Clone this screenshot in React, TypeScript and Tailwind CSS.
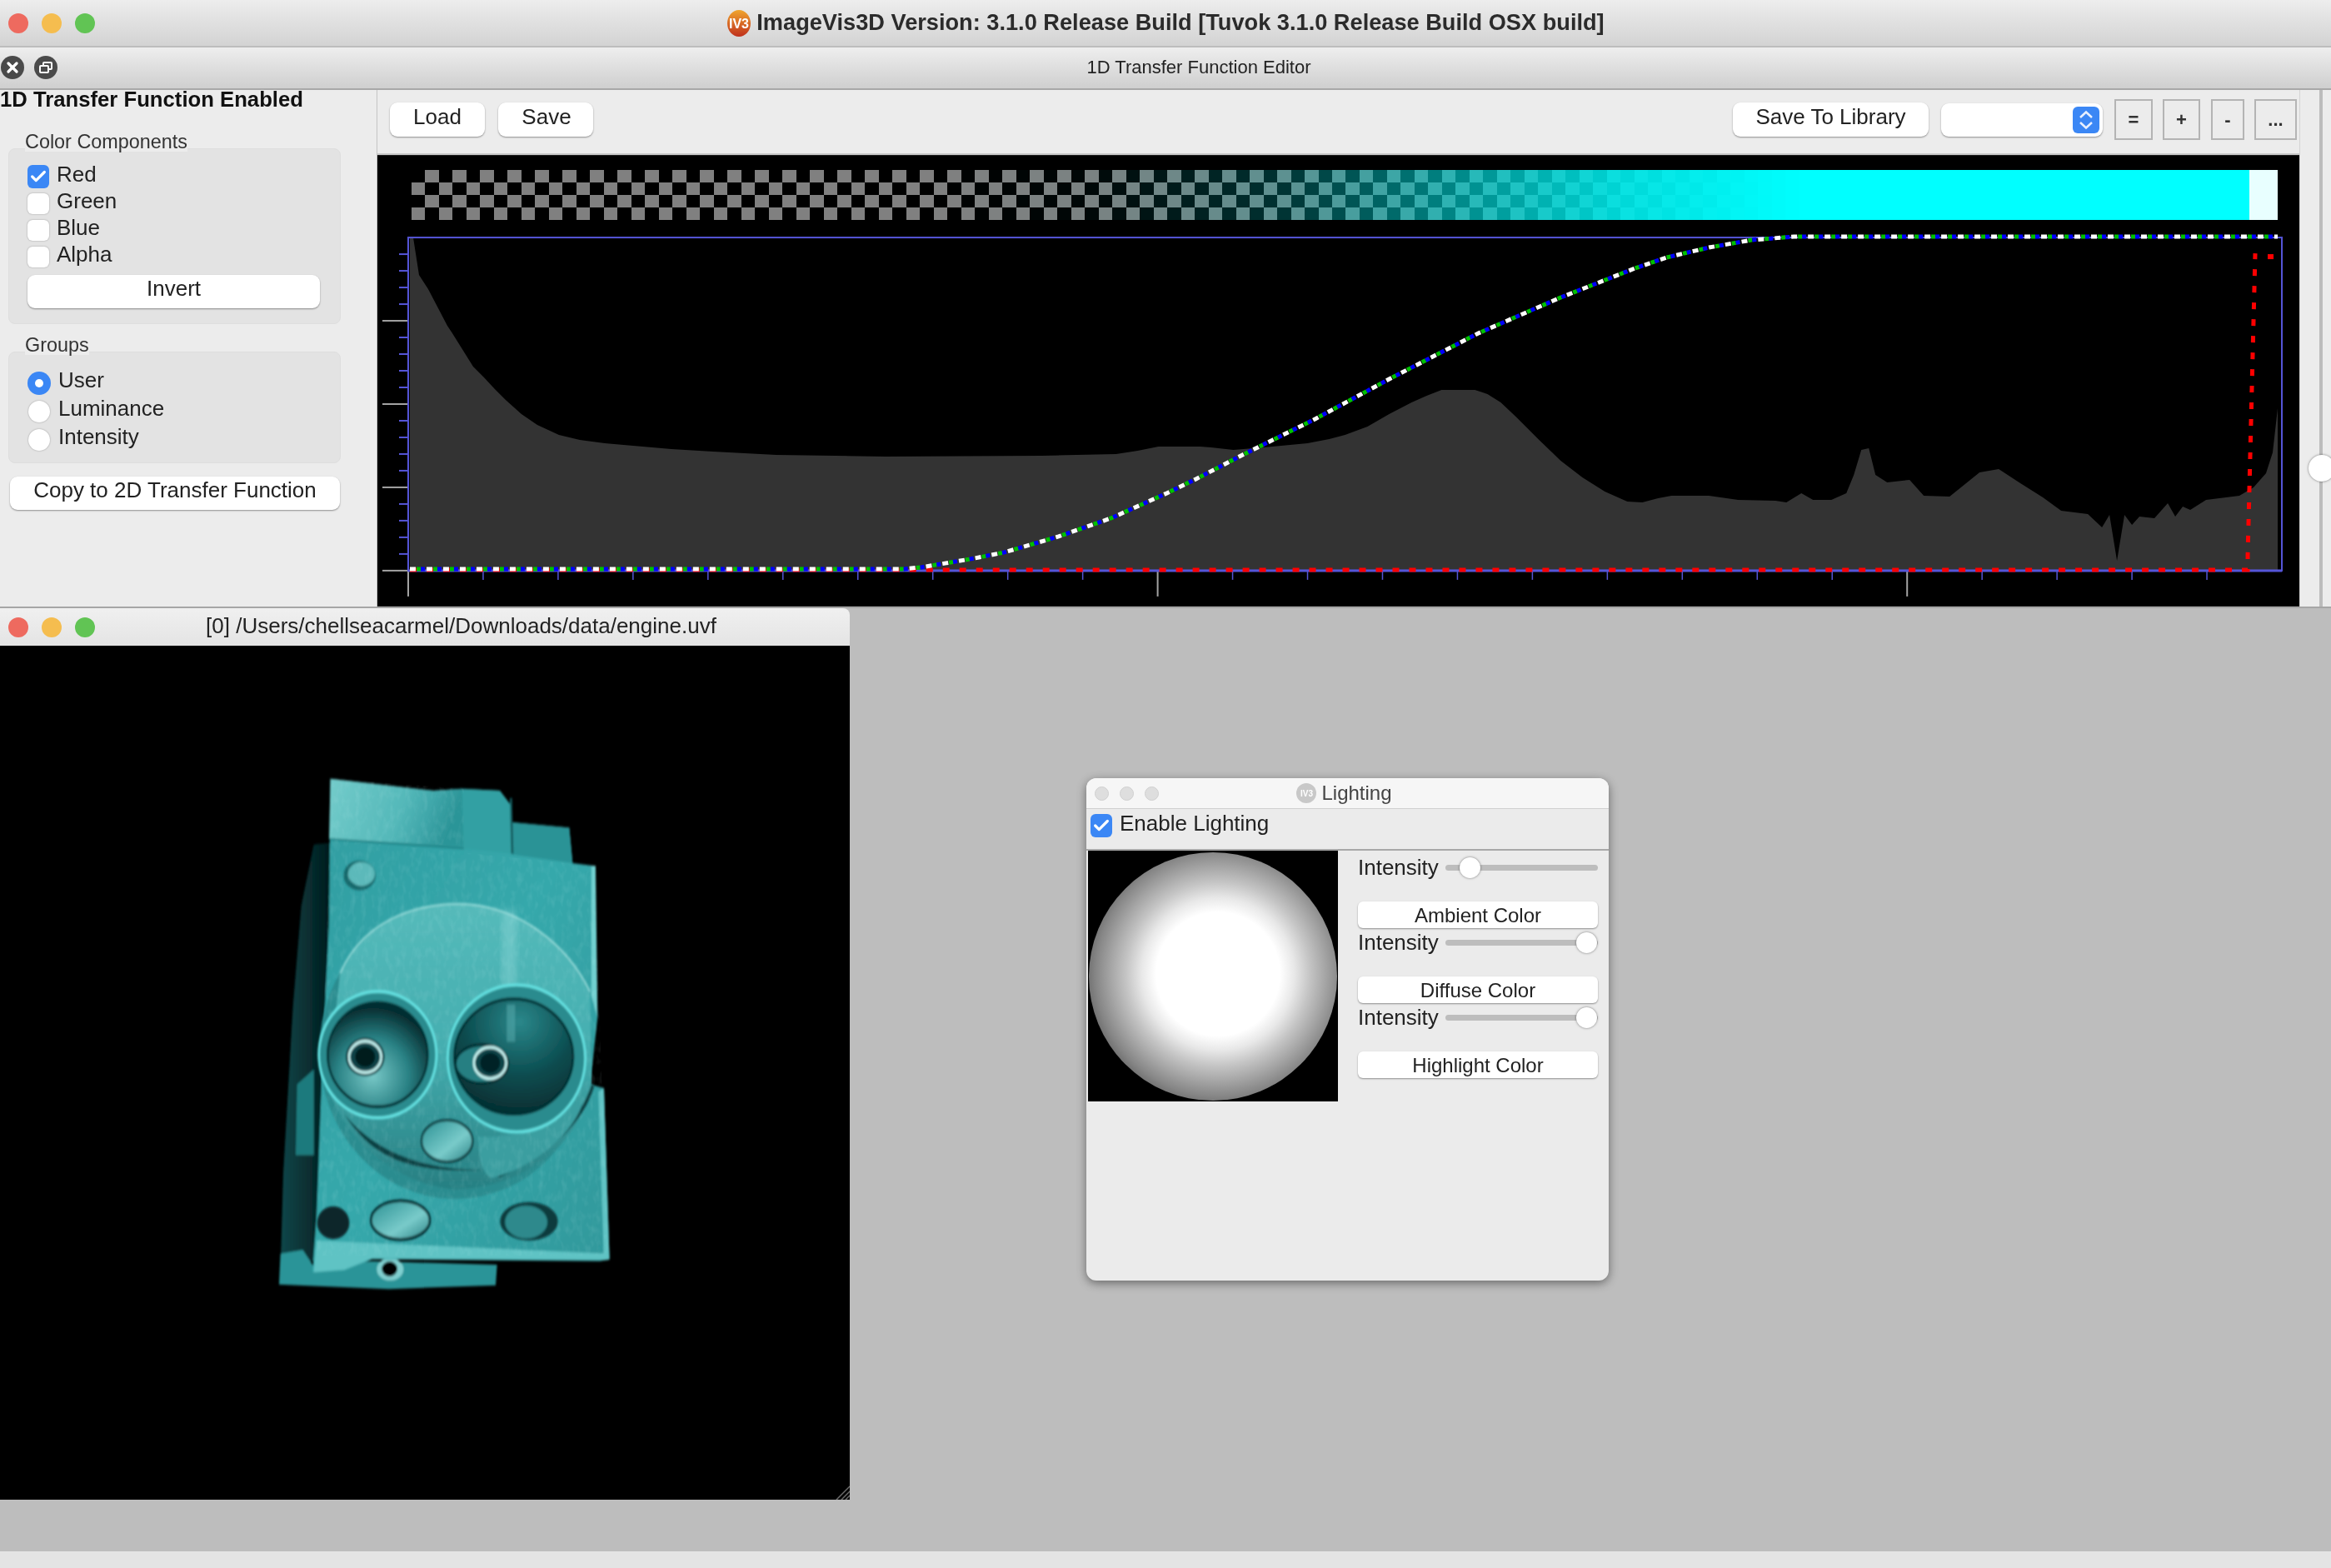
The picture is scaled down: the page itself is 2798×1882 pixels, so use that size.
import React from 'react'
import { Check, X } from 'lucide-react'

const histogram = [
  [491, 285], [495, 285], [502, 330], [513, 347], [536, 391], [542, 400], [567, 440], [580, 453], [593, 467], [606, 480],
  [625, 497], [644, 510], [670, 522], [695, 528], [725, 532], [759, 535], [805, 539], [855, 542], [931, 546], [1062, 548],
  [1250, 547], [1339, 545], [1365, 541], [1390, 536], [1440, 536],
  [1453, 537], [1480, 540], [1516, 537], [1569, 532], [1595, 527], [1614, 522], [1641, 512], [1667, 497], [1694, 483],
  [1712, 475], [1730, 468], [1770, 468], [1785, 473], [1801, 483], [1819, 500], [1846, 527], [1873, 553], [1899, 573],
  [1926, 590], [1953, 602], [1971, 603], [1990, 598], [2006, 595], [2051, 595], [2086, 600],
  [2131, 601], [2144, 603], [2162, 592], [2176, 600], [2198, 600], [2216, 592], [2225, 570], [2234, 540], [2243, 538],
  [2251, 570], [2265, 579], [2292, 576], [2309, 595], [2340, 596], [2376, 567], [2399, 563], [2425, 580], [2452, 597],
  [2474, 613], [2506, 617], [2523, 633], [2532, 618], [2541, 673], [2550, 618], [2559, 630], [2568, 620], [2586, 622],
  [2602, 604], [2611, 620], [2620, 608], [2629, 612], [2648, 600], [2688, 595], [2705, 585], [2720, 568], [2728, 543],
  [2734, 490], [2734, 685], [491, 685],
]

const curve =
  '491,683 1085,683 1105,681 1135,676 1170,670 1205,663 1270,644 1333,622 1400,592 1435,575 1489,547 1578,503 1667,455 1774,400 1873,357 1962,322 2000,309 2051,297 2102,288 2153,284 2734,284'

const alphaStops = [
  [1100, 0], [1300, 0.03], [1530, 0.2], [1750, 0.55], [1944, 0.85], [2100, 0.97], [2160, 1],
]

const alphaAt = (x: number) => {
  if (x <= alphaStops[0][0]) return 0
  for (let i = 1; i < alphaStops.length; i++) {
    const [x1, a1] = alphaStops[i]
    const [x0, a0] = alphaStops[i - 1]
    if (x <= x1) return a0 + ((a1 - a0) * (x - x0)) / (x1 - x0)
  }
  return 1
}

const checkerCells = () => {
  const cells = []
  for (let k = 0; k * 16.5 + 493 < 2700; k++) {
    const x = 493 + k * 16.5
    const a = alphaAt(x)
    for (let r = 0; r < 4; r++) {
      const base = (k + r) % 2 === 1 ? 128 : 0
      const red = Math.round(base * Math.pow(1 - a, 1.4))
      const rest = Math.round(base * Math.pow(1 - a, 1.4) + 255 * a)
      cells.push(
        <rect key={`${k}-${r}`} x={x} y={204 + r * 15} width={16.5} height={15} fill={`rgb(${red},${rest},${rest})`} />,
      )
    }
  }
  return cells
}

const TransferChart = () => {
  const yTicks = []
  for (let i = 1; i <= 20; i++) {
    const y = 285 + i * 20
    const major = i % 5 === 0
    yTicks.push(
      <line key={y} x1={major ? 458 : 478} x2={489} y1={y} y2={y} stroke={major ? '#a3a3a3' : '#5555d8'} strokeWidth={2} />,
    )
  }
  const xTicks = []
  for (let i = 0; i <= 24; i++) {
    const x = 489 + i * 90
    const major = i % 10 === 0
    xTicks.push(
      <line key={x} x1={x} x2={x} y1={685} y2={major ? 716 : 696} stroke={major ? '#a3a3a3' : '#5555d8'} strokeWidth={major ? 2 : 1.5} />,
    )
  }
  return (
    <svg className="block h-full w-full" viewBox="452 186 2308 542">
      <rect x={452} y={186} width={2308} height={542} fill="#000" />
      <g shapeRendering="crispEdges">
        {checkerCells()}
        <rect x={2698} y={204} width={2} height={60} fill="#00ffff" />
        <rect x={2700} y={204} width={34} height={60} fill="#e8ffff" />
      </g>
      <polygon points={histogram.map((p) => p.join(',')).join(' ')} fill="#333333" />
      {yTicks}
      {xTicks}
      <rect x={489} y={285} width={2250} height={400} fill="none" stroke="#5555d8" strokeWidth={2} />
      <line x1={489} x2={2739} y1={685} y2={685} stroke="#5555d8" strokeWidth={3} />
      <polyline points="491,684 2698,684 2698,667 2707,304" fill="none" stroke="#ff0000" strokeWidth={5} strokeDasharray="8 12" />
      <rect x={2722} y={305} width={7} height={6} fill="#ff0000" />
      <polyline points={curve} fill="none" stroke="#00c000" strokeWidth={5} strokeDasharray="5 15" strokeDashoffset={-8} />
      <polyline points={curve} fill="none" stroke="#0000ff" strokeWidth={5} strokeDasharray="5 15" strokeDashoffset={-13} />
      <polyline points={curve} fill="none" stroke="#ffffff" strokeWidth={5} strokeDasharray="7 13" />
    </svg>
  )
}

const Engine = () => (
  <svg className="block h-full w-full" viewBox="0 773 1020 1025">
    <defs>
      <filter id="soft" x="-5%" y="-5%" width="110%" height="110%">
        <feGaussianBlur stdDeviation="3" />
      </filter>
      <filter id="softer" x="-20%" y="-20%" width="140%" height="140%">
        <feGaussianBlur stdDeviation="9" />
      </filter>
      <filter id="grain" x="0" y="0" width="100%" height="100%">
        <feTurbulence type="fractalNoise" baseFrequency="0.05 0.035" numOctaves="2" seed="4" />
        <feColorMatrix values="0 0 0 0 0.75  0 0 0 0 1  0 0 0 0 1  0 0 0 1 -0.45" />
        <feComposite in2="SourceGraphic" operator="in" />
      </filter>
      <linearGradient id="face" x1="0" y1="0" x2="1" y2="1">
        <stop offset="0" stopColor="#2f9da1" />
        <stop offset="0.5" stopColor="#36a8ab" />
        <stop offset="1" stopColor="#2f989b" />
      </linearGradient>
      <linearGradient id="disc" x1="0" y1="0" x2="0" y2="1">
        <stop offset="0" stopColor="#55baba" />
        <stop offset="0.5" stopColor="#45aeb0" />
        <stop offset="1" stopColor="#277f82" />
      </linearGradient>
      <linearGradient id="side" x1="0" y1="0" x2="1" y2="0">
        <stop offset="0" stopColor="#0d474a" />
        <stop offset="1" stopColor="#031a1c" />
      </linearGradient>
      <linearGradient id="top" x1="0" y1="0" x2="1" y2="0.2">
        <stop offset="0" stopColor="#74cccb" />
        <stop offset="0.6" stopColor="#54b8b9" />
        <stop offset="0.8" stopColor="#40a7aa" />
        <stop offset="1" stopColor="#2c9598" />
      </linearGradient>
      <radialGradient id="eyeL" cx="0.45" cy="0.7" r="0.65">
        <stop offset="0" stopColor="#78c8c7" />
        <stop offset="0.55" stopColor="#2a8285" />
        <stop offset="1" stopColor="#062e31" />
      </radialGradient>
      <radialGradient id="eyeR" cx="0.55" cy="0.2" r="0.85">
        <stop offset="0" stopColor="#2b888b" />
        <stop offset="0.55" stopColor="#0b4c4f" />
        <stop offset="1" stopColor="#052a2d" />
      </radialGradient>
      <linearGradient id="lump" x1="0" y1="0" x2="1" y2="1">
        <stop offset="0" stopColor="#2a8f92" />
        <stop offset="0.6" stopColor="#79cbca" />
        <stop offset="1" stopColor="#287f82" />
      </linearGradient>
    </defs>
    <g transform="translate(280 880) scale(0.3333 0.4464)">
      <g filter="url(#soft)">
        <polygon points="290,295 350,290 320,1400 270,1420 170,1440 180,1180 215,730 245,460" fill="url(#side)" />
        <polygon points="170,1395 250,1385 290,1430 500,1415 950,1425 945,1480 560,1490 165,1478" fill="#2a9498" />
        <polygon points="230,940 290,900 290,1130 225,1130" fill="#1f7a7d" />
        <ellipse cx="565" cy="1437" rx="48" ry="30" fill="#7fcfcf" />
        <ellipse cx="563" cy="1436" rx="28" ry="20" fill="#000" />
        <polygon
          points="350,118 430,125 720,150 820,145 960,150 1000,190 1005,235 1210,250 1222,345 1300,352 1312,760 1285,940 1335,950 1355,1410 1320,1415 500,1410 400,1440 285,1445 300,1300 320,900 345,500"
          fill="url(#face)"
        />
        <polygon points="350,118 430,125 720,150 825,145 830,300 345,280" fill="url(#top)" />
        <polygon points="830,145 960,150 1000,190 1005,320 830,305" fill="#33a0a3" />
        <polygon points="1005,235 1210,250 1222,345 1005,322" fill="#2c9396" />
        <line x1="345" y1="280" x2="830" y2="305" stroke="#1d7f82" strokeWidth="5" />
        <line x1="1000" y1="170" x2="1005" y2="320" stroke="#12595c" strokeWidth="8" />
        <polygon points="1290,352 1305,352 1312,760 1290,700" fill="#6fd0d0" />
        <polygon points="1335,950 1355,1410 1335,1412 1315,960" fill="#5fc3c4" />
        <polygon points="300,1360 1350,1395 1350,1412 500,1408 400,1438 290,1445" fill="#5fc3c4" />
      </g>
      <g filter="url(#soft)">
        <ellipse cx="455" cy="378" rx="58" ry="40" fill="#17696c" />
        <ellipse cx="462" cy="374" rx="48" ry="32" fill="#5cb9ba" />
        <ellipse cx="800" cy="850" rx="490" ry="398" fill="#2a8c8f" />
        <path d="M385 640 C 480 480 700 450 840 455 C 1030 465 1200 560 1285 690 L 1290 950 C 1200 1190 900 1220 800 1222 C 600 1210 400 1100 340 940 Z" fill="url(#disc)" />
        <path d="M385 640 C 480 480 700 450 840 455 C 1030 465 1200 560 1285 690" fill="none" stroke="#8fd8d6" strokeWidth="5" />
        <path d="M400 1020 C 500 1140 640 1180 900 1170 C 1100 1170 1260 1050 1300 945 L 1290 940 C 1250 1040 1120 1130 960 1190 L 900 1170 C 700 1170 520 1130 400 1020 Z" fill="#0c3f42" />
        <path d="M880 1080 C 1000 1090 1180 1050 1265 960 C 1260 1050 1100 1160 930 1192 C 880 1170 890 1120 880 1080 Z" fill="#3a9ea0" />
      </g>
      <g filter="url(#grain)" opacity="0.22">
        <polygon points="350,118 830,145 830,300 345,280" fill="#fff" />
        <polygon points="345,280 1300,352 1350,1400 300,1400 320,900" fill="#fff" />
      </g>
      <g filter="url(#softer)">
        <rect x="970" y="470" width="50" height="260" fill="#a5e6e4" opacity="0.3" />
      </g>
      <g filter="url(#soft)">
        <ellipse cx="520" cy="860" rx="215" ry="172" fill="#2a8b8e" />
        <ellipse cx="520" cy="860" rx="212" ry="170" fill="none" stroke="#66e4e4" strokeWidth="8" />
        <ellipse cx="520" cy="860" rx="180" ry="140" fill="url(#eyeL)" stroke="#052d30" strokeWidth="8" />
        <ellipse cx="475" cy="866" rx="70" ry="52" fill="#0d4346" />
        <ellipse cx="475" cy="866" rx="58" ry="42" fill="none" stroke="#c8f5f3" strokeWidth="8" />
        <ellipse cx="475" cy="866" rx="36" ry="27" fill="#041a1c" />
        <ellipse cx="1020" cy="870" rx="252" ry="202" fill="#2a8b8e" />
        <ellipse cx="1020" cy="870" rx="248" ry="198" fill="none" stroke="#66e4e4" strokeWidth="8" />
        <ellipse cx="1010" cy="865" rx="214" ry="155" fill="url(#eyeR)" stroke="#052d30" strokeWidth="8" />
        <rect x="985" y="725" width="30" height="100" fill="#5bb0b1" opacity="0.5" />
        <ellipse cx="895" cy="885" rx="95" ry="52" fill="#257f82" stroke="#062f32" strokeWidth="8" />
        <ellipse cx="925" cy="882" rx="58" ry="42" fill="#0b4548" stroke="#c8f5f3" strokeWidth="8" />
        <ellipse cx="925" cy="882" rx="36" ry="27" fill="#052326" />
        <ellipse cx="770" cy="1092" rx="92" ry="56" fill="url(#lump)" stroke="#0b3b3e" strokeWidth="7" />
        <ellipse cx="360" cy="1312" rx="58" ry="44" fill="#08282b" />
        <ellipse cx="602" cy="1305" rx="106" ry="52" fill="url(#lump)" stroke="#062a2d" strokeWidth="8" />
        <ellipse cx="1065" cy="1308" rx="104" ry="52" fill="#0a3b3e" />
        <ellipse cx="1055" cy="1310" rx="78" ry="46" fill="#2d898c" stroke="#0b4043" strokeWidth="4" />
      </g>
    </g>
  </svg>
)

const Lights = () => (
  <div className="flex gap-[16px] pl-[10px]">
    <span className="h-6 w-6 rounded-full bg-[#ee6a5f]" />
    <span className="h-6 w-6 rounded-full bg-[#f5bd4f]" />
    <span className="h-6 w-6 rounded-full bg-[#61c454]" />
  </div>
)

const Logo = ({ className }: { className: string }) => (
  <svg className={className} viewBox="0 0 30 32">
    <defs>
      <linearGradient id="logo" x1="0" y1="0" x2="0" y2="1">
        <stop offset="0" stopColor="#f0a52e" />
        <stop offset="1" stopColor="#c0301c" />
      </linearGradient>
    </defs>
    <ellipse cx="15" cy="16" rx="14" ry="16" fill="url(#logo)" />
    <text x="15" y="22" textAnchor="middle" fontSize="16" fontWeight="700" fill="#fff" fontFamily="Liberation Sans, sans-serif">
      IV3
    </text>
  </svg>
)

const Btn = ({ children, className }: { children: React.ReactNode; className: string }) => (
  <div className={`flex items-center justify-center rounded-[9px] bg-white pb-[6px] text-[26px] text-[#222] shadow-[0_1px_2px_rgba(0,0,0,0.4)] ${className}`}>
    {children}
  </div>
)

const CheckRow = ({ label, checked }: { label: string; checked?: boolean }) => (
  <div className="flex h-7 items-center gap-[9px]">
    {checked ? (
      <span className="flex h-7 w-[26px] items-center justify-center rounded-md bg-[#3b87f5]">
        <Check className="h-[22px] w-[22px] text-white" strokeWidth={3.5} />
      </span>
    ) : (
      <span className="h-[25px] w-[26px] rounded-md bg-white shadow-[0_0_2px_rgba(0,0,0,0.35)]" />
    )}
    <span className="pb-[6px] text-[26px] leading-7 text-[#222]">{label}</span>
  </div>
)

const RadioRow = ({ label, checked }: { label: string; checked?: boolean }) => (
  <div className="flex h-[30px] items-center gap-[9px]">
    {checked ? (
      <span className="flex h-7 w-7 items-center justify-center rounded-full bg-[#3b87f5]">
        <span className="h-[10px] w-[10px] rounded-full bg-white" />
      </span>
    ) : (
      <span className="mx-px h-[26px] w-[26px] rounded-full bg-white shadow-[0_0_2px_rgba(0,0,0,0.35)]" />
    )}
    <span className="pb-[8px] text-[26px] leading-7 text-[#222]">{label}</span>
  </div>
)

const GroupLabel = ({ children }: { children: React.ReactNode }) => (
  <div className="relative z-10 -mb-1 ml-[30px] h-6 w-fit bg-[#ececec] text-[23.4px] leading-6 text-[#333]">{children}</div>
)

const SquareBtn = ({ label, className }: { label: string; className: string }) => (
  <div className={`flex h-[49px] items-center justify-center border-2 border-[#b4b4b4] text-[22px] font-bold text-[#333] ${className}`}>
    {label}
  </div>
)

const LightSlider = ({ pos }: { pos: string }) => (
  <div className="flex h-[35px] items-center gap-[10px]">
    <span className="w-[95px] shrink-0 pb-[2px] text-[26px] leading-7 whitespace-nowrap text-[#222]">Intensity</span>
    <div className="relative h-[7px] flex-1 rounded-full bg-[#bdbdbd]">
      <span className={`absolute top-[-9px] h-[25px] w-[25px] rounded-full bg-white shadow-[0_0_3px_rgba(0,0,0,0.5)] ${pos}`} />
    </div>
  </div>
)

const LightBtn = ({ label }: { label: string }) => (
  <div className="mt-[23px] flex h-8 items-center justify-center rounded-md bg-white pt-[2px] text-[24px] text-[#222] shadow-[0_1px_2px_rgba(0,0,0,0.4)]">
    {label}
  </div>
)

export default function App() {
  return (
    <div className="flex h-[1882px] w-[2798px] flex-col overflow-hidden bg-[#bdbdbd] font-['Liberation_Sans',Arial,sans-serif] blur-[0.6px]">
      <div className="relative flex h-[57px] shrink-0 items-center border-b-2 border-[#bdbdbd] bg-gradient-to-b from-[#ededed] to-[#d3d3d3]">
        <Lights />
        <div className="absolute inset-0 flex items-center justify-center gap-[6px]">
          <Logo className="h-8 w-[30px]" />
          <span className="text-[27.2px] font-bold text-[#2b2b2b]">
            ImageVis3D Version: 3.1.0 Release Build [Tuvok 3.1.0 Release Build OSX build]
          </span>
        </div>
      </div>
      <div className="relative flex h-[51px] shrink-0 items-center gap-[12px] border-b-2 border-[#a8a8a8] bg-gradient-to-b from-[#eeeeee] to-[#cfcfcf] pb-[2px] pl-px">
        <span className="flex h-7 w-7 items-center justify-center rounded-full bg-[#4a4a4a]">
          <X className="h-5 w-5 text-white" strokeWidth={4} />
        </span>
        <span className="flex h-7 w-7 items-center justify-center rounded-full bg-[#4a4a4a]">
          <svg className="h-5 w-5" viewBox="0 0 20 20" fill="none" stroke="#fff" strokeWidth="2">
            <rect x="3" y="8" width="10" height="8" rx="1" />
            <path d="M7 8V5a1 1 0 0 1 1-1h8a1 1 0 0 1 1 1v6a1 1 0 0 1-1 1h-3" />
          </svg>
        </span>
        <div className="absolute inset-0 flex items-center justify-center pb-[2px] pl-[80px] text-[22px] text-[#222]">1D Transfer Function Editor</div>
      </div>

      <div className="flex h-[620px] shrink-0 bg-[#ececec]">
        <div className="w-[452px] shrink-0">
          <div className="h-6 text-[25.7px] font-bold leading-[22px] whitespace-nowrap text-[#111]">1D Transfer Function Enabled</div>
          <div className="mt-[26px]">
            <GroupLabel>Color Components</GroupLabel>
            <div className="ml-[10px] h-[211px] w-[399px] rounded-lg border border-[#dedede] bg-[#e3e3e3] pt-[19px] pl-[22px]">
              <div className="flex flex-col gap-1">
                <CheckRow label="Red" checked />
                <CheckRow label="Green" />
                <CheckRow label="Blue" />
                <CheckRow label="Alpha" />
              </div>
              <Btn className="mt-2 h-10 w-[351px]">
                <span className="mb-[2px]">Invert</span>
              </Btn>
            </div>
          </div>
          <div className="mt-[13px]">
            <GroupLabel>Groups</GroupLabel>
            <div className="ml-[10px] h-[134px] w-[399px] rounded-lg border border-[#dedede] bg-[#e3e3e3] pt-[22px] pl-[22px]">
              <div className="flex flex-col gap-1">
                <RadioRow label="User" checked />
                <RadioRow label="Luminance" />
                <RadioRow label="Intensity" />
              </div>
            </div>
          </div>
          <Btn className="mt-4 ml-3 h-10 w-[396px]">
            <span className="mb-[2px]">Copy to 2D Transfer Function</span>
          </Btn>
        </div>

        <div className="flex w-[2308px] shrink-0 flex-col border-l border-[#c4c4c4]">
          <div className="flex h-[78px] shrink-0 items-center border-b-2 border-[#c9c9c9] pb-[5px] pl-[15px]">
            <Btn className="h-[41px] w-[114px]">Load</Btn>
            <Btn className="ml-4 h-[41px] w-[114px]">
              <span className="ml-[2px]">Save</span>
            </Btn>
            <div className="flex-1" />
            <Btn className="h-[41px] w-[235px]">Save To Library</Btn>
            <div className="ml-[15px] flex h-10 w-[194px] items-center justify-end rounded-[9px] bg-white pr-1 shadow-[0_1px_2px_rgba(0,0,0,0.4)]">
              <span className="flex h-8 w-8 rounded-md bg-[#3b87f5]">
                <svg className="h-8 w-8" viewBox="0 0 32 32" fill="none" stroke="#e8f0ff" strokeWidth="2.5">
                  <path d="M9 13 16 6.5 23 13M9 19 16 25.5 23 19" />
                </svg>
              </span>
            </div>
            <SquareBtn label="=" className="ml-[14px] w-[46px]" />
            <SquareBtn label="+" className="ml-3 w-[45px]" />
            <SquareBtn label="-" className="ml-[13px] w-10" />
            <SquareBtn label="..." className="ml-3 mr-[3px] w-[51px]" />
          </div>
          <div className="min-h-0 flex-1">
            <TransferChart />
          </div>
        </div>

        <div className="relative flex-1 overflow-hidden border-l border-[#d4d4d4]">
          <div className="ml-[23px] h-full w-1 bg-[#bcbcbc]" />
          <span className="absolute top-[438px] left-[10px] h-8 w-8 rounded-full bg-white shadow-[0_0_3px_rgba(0,0,0,0.5)]" />
        </div>
      </div>

      <div className="relative min-h-0 flex-1 border-t-2 border-[#a6a6a6]">
        <div className="absolute top-0 left-0 flex h-[1070px] w-[1020px] flex-col">
          <div className="flex h-[45px] shrink-0 items-center rounded-tr-lg bg-gradient-to-b from-[#f0f0f0] to-[#e4e4e4]">
            <Lights />
            <div className="flex-1 pr-[27px] pb-[2px] text-center text-[26px] whitespace-nowrap text-[#222]">[0] /Users/chellseacarmel/Downloads/data/engine.uvf</div>
          </div>
          <div className="relative min-h-0 flex-1 bg-black">
            <Engine />
            <svg className="absolute right-0 bottom-0 h-5 w-5" viewBox="0 0 20 20">
              <path d="M4 20 20 4M10 20 20 10M15 20 20 15" stroke="#6b6b6b" strokeWidth="1.5" />
            </svg>
          </div>
        </div>

        <div className="absolute top-[204px] left-[1304px] flex h-[603px] w-[627px] flex-col overflow-hidden rounded-xl bg-[#ebebeb] shadow-[0_3px_12px_rgba(0,0,0,0.45)]">
          <div className="relative flex h-[37px] shrink-0 items-center gap-[13px] border-b border-[#d0d0d0] bg-[#f6f6f6] pl-[10px]">
            <span className="h-[17px] w-[17px] rounded-full border border-[#cfcfcf] bg-[#dedede]" />
            <span className="h-[17px] w-[17px] rounded-full border border-[#cfcfcf] bg-[#dedede]" />
            <span className="h-[17px] w-[17px] rounded-full border border-[#cfcfcf] bg-[#dedede]" />
            <div className="absolute inset-0 flex items-center justify-center gap-[6px] pr-[8px]">
              <span className="flex h-6 w-6 items-center justify-center rounded-full bg-[#c8c8c8] text-[10px] font-bold text-white">IV3</span>
              <span className="text-[24px] text-[#444]">Lighting</span>
            </div>
          </div>
          <div className="flex h-[50px] shrink-0 items-start gap-[9px] border-b-2 border-[#a8a8a8] pt-[5px] pl-[5px]">
            <span className="mt-px flex h-7 w-[26px] items-center justify-center rounded-md bg-[#3b87f5]">
              <Check className="h-[22px] w-[22px] text-white" strokeWidth={3.5} />
            </span>
            <span className="text-[26px] leading-6 text-[#222]">Enable Lighting</span>
          </div>
          <div className="flex items-start pl-[2px]">
            <div className="flex h-[301px] w-[300px] shrink-0 items-center justify-center bg-black">
              <div className="h-[298px] w-[298px] rounded-full bg-[radial-gradient(circle_158px_at_52%_49%,#ffffff_0%,#ffffff_47%,#e8e8e8_58%,#c4c4c4_70%,#a4a4a4_82%,#868686_93%,#6e6e6e_100%)]" />
            </div>
            <div className="ml-6 w-[288px] pt-[3px]">
              <LightSlider pos="left-[17px]" />
              <LightBtn label="Ambient Color" />
              <LightSlider pos="right-[1px]" />
              <LightBtn label="Diffuse Color" />
              <LightSlider pos="right-[1px]" />
              <LightBtn label="Highlight Color" />
            </div>
          </div>
        </div>
      </div>

      <div className="h-5 shrink-0 bg-[#e4e4e4]" />
    </div>
  )
}
